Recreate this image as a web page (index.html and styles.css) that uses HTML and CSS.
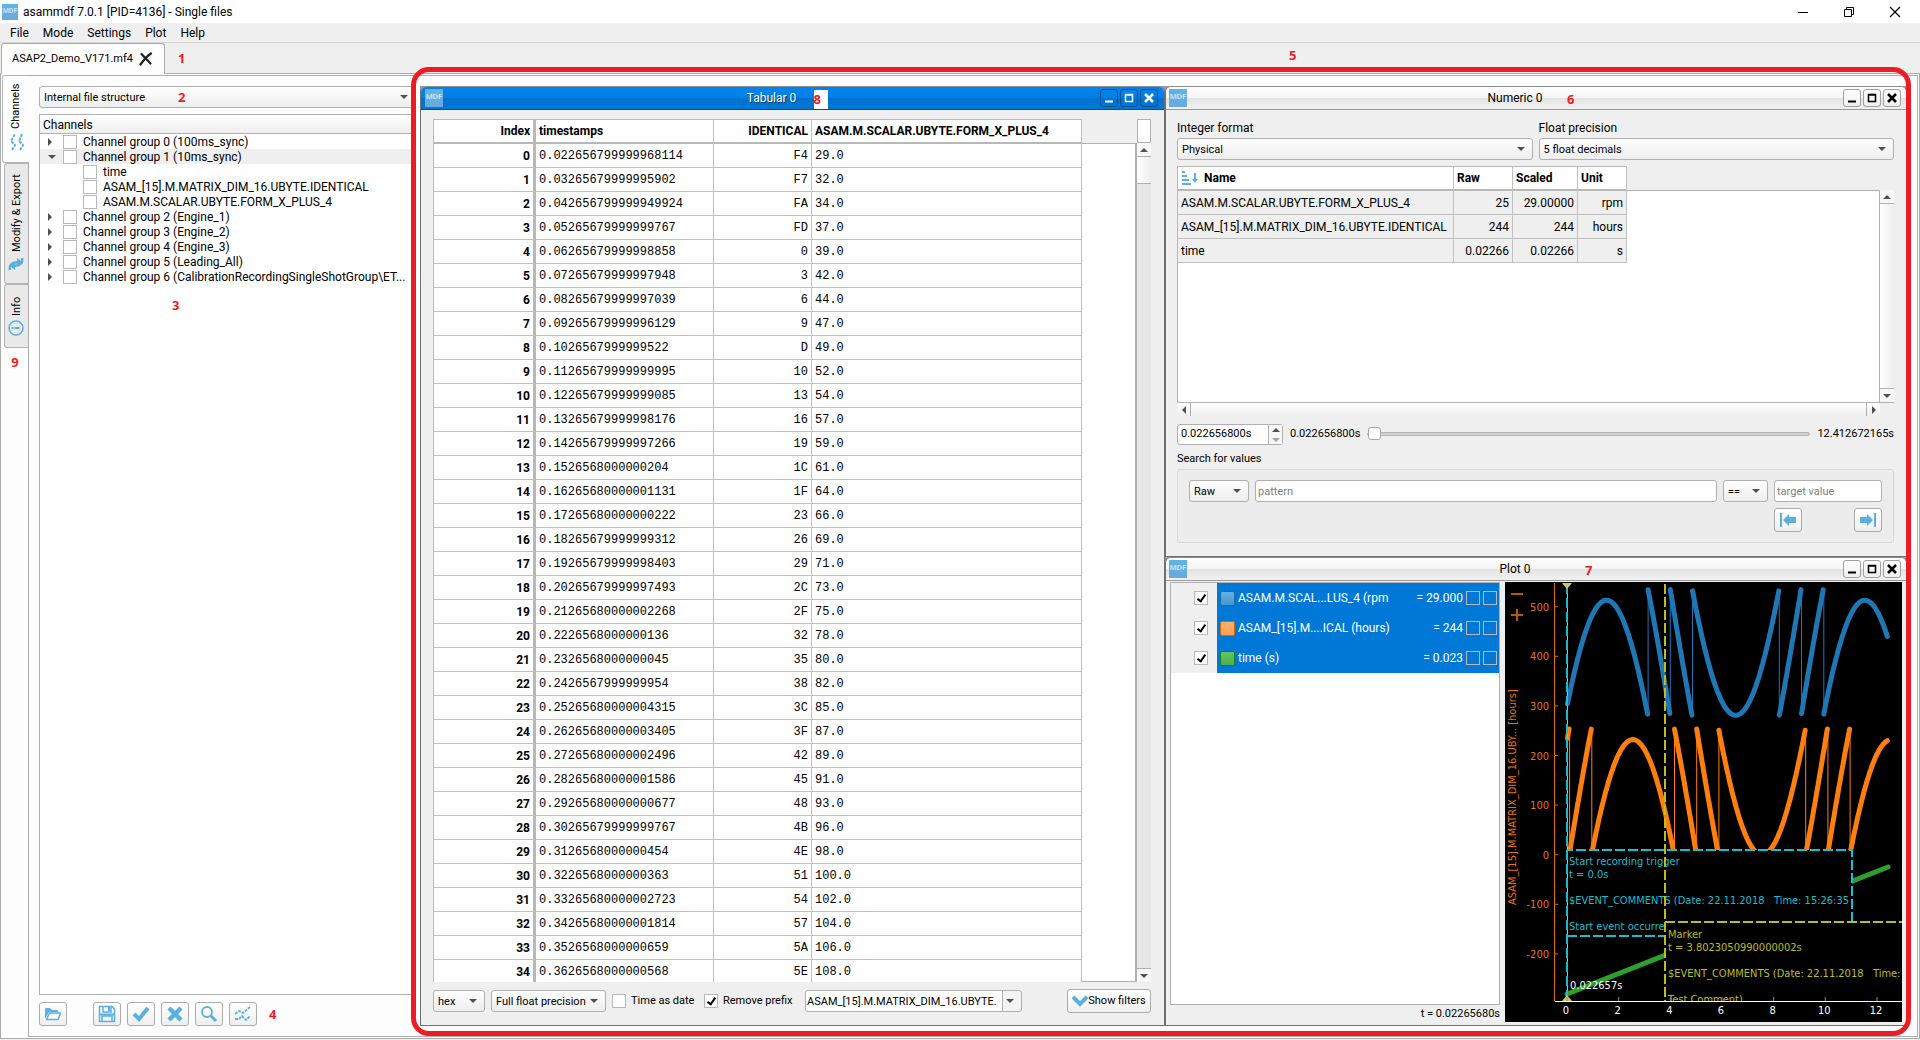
FILE: index.html
```html
<!DOCTYPE html>
<html lang="en">
<head>
<meta charset="utf-8">
<title>asammdf 7.0.1 [PID=4136] - Single files</title>
<link rel="stylesheet" href="styles.css">
</head>
<body>
<header class="titlebar">
  <span class="logo logo-app">MDF</span>
  <h1 class="app-title">asammdf 7.0.1 [PID=4136] - Single files</h1>
  <div class="sys-buttons">
    <button class="sys" aria-label="Minimize"><svg width="12" height="12"><path d="M1 6.500h10" stroke="#000"/></svg></button>
    <button class="sys" aria-label="Restore"><svg width="12" height="12" fill="none" stroke="#000"><path d="M3.500 3V1.500h7v7H9M1.500 3.500h7v7h-7z"/></svg></button>
    <button class="sys" aria-label="Close"><svg width="12" height="12"><path d="M1 1l10 10M11 1L1 11" stroke="#000" stroke-width="1.200"/></svg></button>
  </div>
</header>
<nav class="menubar">
  <button class="menu">File</button><button class="menu">Mode</button><button class="menu">Settings</button><button class="menu">Plot</button><button class="menu">Help</button>
</nav>
<div class="filetabs">
  <div class="filetab"><span>ASAP2_Demo_V171.mf4</span>
    <button class="closetab" aria-label="Close file"><svg width="14" height="14"><path d="M2.500 2l9 9.500M12 1.500C8 4 4 9 1.500 12.500" fill="none" stroke="#222" stroke-width="2.200" stroke-linecap="round"/></svg></button>
  </div>
  <span class="note">1</span>
</div>
<main class="doc">
  <aside class="sidetabs">
    <button class="sidetab active"><svg width="16" height="18" fill="none" stroke="#5bb0e2" stroke-width="2" stroke-dasharray="3 1"><path d="M4 1l-3 5 4 4-3 7M12 1L9 6l4 4-4 7"/></svg><span>Channels</span></button>
    <button class="sidetab export"><svg width="16" height="16" fill="none" stroke="#5bb0e2" stroke-width="2.500"><path d="M14 2C15 7 12 10 6 9.500"/><path d="M2 14C1 9 4 6 10 6.500"/><path d="M7 5v9L1 9.500zM9 2v9l6-4.500z" fill="#5bb0e2" stroke="none"/></svg><span>Modify &amp; Export</span></button>
    <button class="sidetab info"><svg width="16" height="16" fill="none" stroke="#5bb0e2" stroke-width="1.500"><circle cx="8" cy="8" r="7"/><path d="M4.500 8h5" stroke-width="2"/><path d="M10.500 8h2" stroke-width="2"/></svg><span>Info</span></button>
    <span class="note">9</span>
  </aside>
  <section class="pane">
    <div class="browser">
      <div class="combo combo-wide"><select aria-label="Channel view"><option>Internal file structure</option></select><span class="note note-2">2</span></div>
      <div class="tree">
        <div class="tree-head">Channels</div>
        <ul class="tree-list">
          <li class="node"><i class="closed"></i><label><input type="checkbox">Channel group 0 (100ms_sync)</label></li>
          <li class="node current"><i class="opened"></i><label><input type="checkbox">Channel group 1 (10ms_sync)</label></li>
          <li class="node leaf"><label><input type="checkbox">time</label></li>
          <li class="node leaf"><label><input type="checkbox">ASAM_[15].M.MATRIX_DIM_16.UBYTE.IDENTICAL</label></li>
          <li class="node leaf"><label><input type="checkbox">ASAM.M.SCALAR.UBYTE.FORM_X_PLUS_4</label></li>
          <li class="node"><i class="closed"></i><label><input type="checkbox">Channel group 2 (Engine_1)</label></li>
          <li class="node"><i class="closed"></i><label><input type="checkbox">Channel group 3 (Engine_2)</label></li>
          <li class="node"><i class="closed"></i><label><input type="checkbox">Channel group 4 (Engine_3)</label></li>
          <li class="node"><i class="closed"></i><label><input type="checkbox">Channel group 5 (Leading_All)</label></li>
          <li class="node"><i class="closed"></i><label><input type="checkbox">Channel group 6 (CalibrationRecordingSingleShotGroup\ET...</label></li>
        </ul>
        <span class="note note-3">3</span>
      </div>
      <div class="tools">
        <button class="btn tool first" aria-label="Load channel list"><svg width="18" height="16" fill="#5bb0e2"><path d="M1 13V3q0-1 1-1h4l1.500 2H13q1 0 1 1v1H5z"/><path d="M5.500 7H16.500L14 13.500H2.500z" fill="#fafafa" stroke="#5bb0e2" stroke-width="1.500" stroke-linejoin="round"/></svg></button>
        <button class="btn tool" aria-label="Save channel list"><svg width="18" height="18" fill="none" stroke="#5bb0e2" stroke-width="1.500"><path d="M1.500 1.500H14L16.500 4V16.500h-15z"/><path d="M5 2v5h8V2M4 16v-5h10v5"/><path d="M10 2h2v4h-2z" fill="#5bb0e2" stroke="none"/><path d="M1 9.500h16" stroke-width="2"/></svg></button>
        <button class="btn tool" aria-label="Select all"><svg width="18" height="16"><path d="M2 8l5 5L16 2" fill="none" stroke="#5bb0e2" stroke-width="4"/></svg></button>
        <button class="btn tool" aria-label="Clear selection"><svg width="18" height="16"><path d="M3 2l12 12M15 2L3 14" stroke="#5bb0e2" stroke-width="4.500"/></svg></button>
        <button class="btn tool" aria-label="Search"><svg width="18" height="18" fill="none" stroke="#5bb0e2"><circle cx="7" cy="7" r="5" stroke-width="1.800"/><path d="M11 11l5 5" stroke-width="3"/></svg></button>
        <button class="btn tool" aria-label="Create window"><svg width="18" height="16" fill="none" stroke="#5bb0e2" stroke-width="1.800" stroke-dasharray="3 1"><path d="M1 8l4-3 4 2 7-6M1 13h4l3-3 4 4 4-4"/></svg></button>
        <span class="note">4</span>
      </div>
    </div>
    <div class="mdi">
      <section class="win tabular active-win">
        <header class="win-title"><span class="logo">MDF</span><h2>Tabular 0<span class="note note-8">8</span></h2>
          <button class="wb" aria-label="Minimize"><svg width="12" height="12"><path d="M2 9.500h8" stroke="currentColor" stroke-width="2"/></svg></button>
          <button class="wb" aria-label="Maximize"><svg width="12" height="12"><path d="M2.500 2.500h7v7h-7zM2 3h8" fill="none" stroke="currentColor" stroke-width="1.500"/></svg></button>
          <button class="wb" aria-label="Close"><svg width="12" height="12"><path d="M2 2l8 8M10 2l-8 8" stroke="currentColor" stroke-width="2.500"/></svg></button>
        </header>
        <div class="tab-body">
          <div class="grid-view">
            <table class="grid values">
              <colgroup><col class="c-index"><col class="c-time"><col class="c-ident"><col class="c-form"></colgroup>
              <thead><tr><th class="r">Index</th><th>timestamps</th><th class="r">IDENTICAL</th><th>ASAM.M.SCALAR.UBYTE.FORM_X_PLUS_4</th></tr></thead>
              <tbody id="rows"></tbody>
            </table>
            <div class="blank"></div>
            <div class="vscroll long"><b class="up"></b><span class="thumb"></span><b class="down"></b></div>
            <div class="corner"></div>
          </div>
          <div class="tab-controls">
            <div class="combo w-hex"><select aria-label="Format"><option>hex</option></select></div>
            <div class="combo w-prec"><select aria-label="Float precision"><option>Full float precision</option></select></div>
            <label class="check date-check"><input type="checkbox">Time as date</label>
            <label class="check prefix-check"><input type="checkbox" checked>Remove prefix</label>
            <div class="combo editable"><select aria-label="Prefix"><option>ASAM_[15].M.MATRIX_DIM_16.UBYTE.</option></select></div>
            <button class="btn filters"><svg width="16" height="12"><path d="M1 2l7 7 7-7" fill="none" stroke="#5bb0e2" stroke-width="4"/></svg>Show filters</button>
          </div>
        </div>
      </section>
      <section class="win numeric">
        <header class="win-title"><span class="logo">MDF</span><h2>Numeric 0<span class="note note-6">6</span></h2>
          <button class="wb" aria-label="Minimize"><svg width="12" height="12"><path d="M2 9.500h8" stroke="currentColor" stroke-width="2"/></svg></button>
          <button class="wb" aria-label="Maximize"><svg width="12" height="12"><path d="M2.500 2.500h7v7h-7zM2 3h8" fill="none" stroke="currentColor" stroke-width="1.500"/></svg></button>
          <button class="wb" aria-label="Close"><svg width="12" height="12"><path d="M2 2l8 8M10 2l-8 8" stroke="currentColor" stroke-width="2.500"/></svg></button>
        </header>
        <div class="num-body">
          <div class="formats">
            <div><label for="intf">Integer format</label><div class="combo"><select id="intf"><option>Physical</option></select></div></div>
            <div><label for="flf">Float precision</label><div class="combo"><select id="flf"><option>5 float decimals</option></select></div></div>
          </div>
          <div class="num-view">
            <table class="grid nums">
              <colgroup><col class="n-name"><col class="n-raw"><col class="n-scaled"><col class="n-unit"></colgroup>
              <thead><tr><th><svg class="sort" width="18" height="16" fill="#5bb0e2"><path d="M1 1h3v2H1zM1 5h5v2H1zM1 9h7v2H1zM1 13h9v2H1zM13 3h2v6h2l-3 4-3-4h2z"/></svg>Name</th><th>Raw</th><th>Scaled</th><th>Unit</th></tr></thead>
              <tbody>
                <tr><td>ASAM.M.SCALAR.UBYTE.FORM_X_PLUS_4</td><td class="r">25</td><td class="r">29.00000</td><td class="r">rpm</td></tr>
                <tr><td>ASAM_[15].M.MATRIX_DIM_16.UBYTE.IDENTICAL</td><td class="r">244</td><td class="r">244</td><td class="r">hours</td></tr>
                <tr><td>time</td><td class="r">0.02266</td><td class="r">0.02266</td><td class="r">s</td></tr>
              </tbody>
            </table>
            <div class="blank"></div>
            <div class="vscroll"><b class="up"></b><b class="down"></b></div>
          </div>
          <div class="hscroll"><b class="left"></b><b class="right"></b></div>
          <div class="timeline">
            <div class="spin"><input type="text" value="0.022656800s" aria-label="Timestamp"><span class="arrows"><b class="up"></b><b class="down"></b></span></div>
            <label for="pos">0.022656800s</label>
            <input id="pos" class="slider" type="range" min="0" max="1000" value="0">
            <span>12.412672165s</span>
          </div>
          <fieldset class="search">
            <legend>Search for values</legend>
            <div class="search-box">
              <div class="combo"><select aria-label="Value kind"><option>Raw</option></select></div>
              <input class="field" type="text" placeholder="pattern" aria-label="Pattern">
              <div class="combo"><select aria-label="Operator"><option>==</option></select></div>
              <input class="field" type="text" placeholder="target value" aria-label="Target value">
              <div class="steps">
                <button class="btn step" aria-label="Previous match"><svg width="16" height="14" fill="#5bb0e2"><path d="M0 0h2v14H0zM3 7l6-6v3h7v6H9v3z"/></svg></button>
                <button class="btn step" aria-label="Next match"><svg width="16" height="14" fill="#5bb0e2"><path d="M14 0h2v14h-2zM13 7L7 1v3H0v6h7v3z"/></svg></button>
              </div>
            </div>
          </fieldset>
        </div>
      </section>
      <section class="win plot">
        <header class="win-title"><span class="logo">MDF</span><h2>Plot 0<span class="note note-7">7</span></h2>
          <button class="wb" aria-label="Minimize"><svg width="12" height="12"><path d="M2 9.500h8" stroke="currentColor" stroke-width="2"/></svg></button>
          <button class="wb" aria-label="Maximize"><svg width="12" height="12"><path d="M2.500 2.500h7v7h-7zM2 3h8" fill="none" stroke="currentColor" stroke-width="1.500"/></svg></button>
          <button class="wb" aria-label="Close"><svg width="12" height="12"><path d="M2 2l8 8M10 2l-8 8" stroke="currentColor" stroke-width="2.500"/></svg></button>
        </header>
        <div class="plot-body">
          <div class="signals">
            <ul class="signal-list">
              <li><input type="checkbox" checked aria-label="Show FORM_X_PLUS_4"><div class="sig"><i class="swatch blue"></i><span class="sig-name">ASAM.M.SCAL...LUS_4 (rpm</span><span class="sig-val">= 29.000</span><input type="checkbox" aria-label="Common axis"><input type="checkbox" aria-label="Individual axis"></div></li>
              <li><input type="checkbox" checked aria-label="Show IDENTICAL"><div class="sig"><i class="swatch orange"></i><span class="sig-name">ASAM_[15].M....ICAL (hours)</span><span class="sig-val">= 244</span><input type="checkbox" aria-label="Common axis"><input type="checkbox" aria-label="Individual axis"></div></li>
              <li><input type="checkbox" checked aria-label="Show time"><div class="sig"><i class="swatch green"></i><span class="sig-name">time (s)</span><span class="sig-val">= 0.023</span><input type="checkbox" aria-label="Common axis"><input type="checkbox" aria-label="Individual axis"></div></li>
            </ul>
            <div class="cursor-time">t = 0.02265680s</div>
          </div>
          <svg class="graph" viewBox="0 0 397 440" preserveAspectRatio="xMinYMin meet">
            <defs>
              <clipPath id="area"><path d="M50 0H396V419H50z"/></clipPath>
              <clipPath id="cyanText"><path d="M62 260H346V354H62z"/></clipPath>
              <clipPath id="yellowText"><path d="M160 340H396V419H160z"/></clipPath>
            </defs>
            <g stroke="#b8590a" stroke-width="2"><path d="M6 12h12M6 33h12M12 27v12"/></g>
            <path d="M49.500 1V419" stroke="#d86c10"/>
            <g id="yaxis" class="ytext"></g>
            <text class="ytext" transform="translate(11 323) rotate(-90)">ASAM_[15].M.MATRIX_DIM_16.UBY... [hours]</text>
            <g clip-path="url(#area)" fill="none">
              <path id="blueThin" stroke="#1f77b4"/><path id="blueThick" stroke="#1f77b4" stroke-width="5" stroke-linecap="round"/>
              <path id="orangeThin" stroke="#ff7f0e"/><path id="orangeThick" stroke="#ff7f0e" stroke-width="5" stroke-linecap="round"/>
              <path d="M62 412L383 285" stroke="#2ca02c" stroke-width="5" stroke-linecap="round"/>
            </g>
            <path d="M62 268H347V354H62z"/>
            <path d="M347 340V268H62M62 354H160" fill="none" stroke="#17becf" stroke-width="2" stroke-dasharray="10 3"/>
            <g class="cyan" clip-path="url(#cyanText)">
              <text x="64" y="283">Start recording trigger</text><text x="64" y="296">t = 0.0s</text>
              <text x="64" y="322">$EVENT_COMMENTS (Date: 22.11.2018&#160;&#160; Time: 15:26:35</text>
              <text x="64" y="348">Start event occurre</text>
            </g>
            <path d="M160 340H397V419H160z"/>
            <path d="M160 340H397" stroke="#bcbd22" stroke-width="2" stroke-dasharray="10 3"/>
            <path d="M160 2V419" stroke="#bcbd22" stroke-width="2" stroke-dasharray="10 3"/>
            <g class="yellow" clip-path="url(#yellowText)">
              <text x="163" y="356">Marker</text><text x="163" y="369">t = 3.8023050990000002s</text>
              <text x="163" y="395">$EVENT_COMMENTS (Date: 22.11.2018&#160;&#160; Time:</text><text x="163" y="421">Test Comment)</text>
            </g>
            <path d="M62.500 2V419" stroke="#b9c27a"/>
            <path d="M62 2V419" stroke="#17becf" stroke-width="2" stroke-dasharray="10 4"/>
            <path d="M57 1h10l-5 6zM57 419h10l-5-6z" fill="#cfc75e"/>
            <text class="white" x="65" y="407">0.022657s</text>
            <path d="M50 419.500H397" stroke="#fff"/>
            <g id="xaxis" class="white" text-anchor="middle"></g>
          </svg>
        </div>
      </section>
      <div class="callout"></div>
      <span class="note note-5">5</span>
    </div>
  </section>
</main>
<script src="app.js"></script>
</body>
</html>
```
FILE: styles.css
```css
* { box-sizing: border-box; }
body {
  margin: 0; height: 100vh; min-height: 640px; display: flex; flex-direction: column;
  background: #efefef; color: #000; font: 12px/16px Roboto, "Open Sans", sans-serif; overflow: hidden;
}
button, input, select { font: inherit; color: inherit; margin: 0; }
button { padding: 0; background: none; border: 0; }
h1, h2, ul { margin: 0; padding: 0; font: inherit; list-style: none; }
svg { flex: none; }
.note { color: #ed1c24; font: 700 13px/16px "Open Sans", sans-serif; }

/* Controls use the smaller of the two text sizes. */
select, .filetab, .sidetab, .check, .filters, .timeline, .search, .cursor-time { font-size: 11px; }

.titlebar { display: flex; align-items: center; height: 23px; background: #fff; padding-left: 2px; gap: 5px; flex: none; }
.app-title { flex: 1; }
.logo {
  width: 18px; height: 18px; flex: none; background: linear-gradient(#5fb4e4, #6aa9dd); color: #c4e0f4;
  font-size: 8px; font-weight: 700; line-height: 15px; text-align: center; overflow: hidden;
}
.logo-app { width: 16px; height: 16px; font-size: 7px; }
.sys-buttons { display: flex; padding-right: 2px; }
.sys { width: 46px; height: 20px; display: grid; place-items: center; }

.menubar { display: flex; height: 20px; border-bottom: 1px solid #d6d6d6; padding-left: 3px; flex: none; }
.menu { padding: 0 7px; }
.filetabs { display: flex; height: 30px; flex: none; gap: 13px; align-items: center; padding-left: 1px; }
.filetab {
  display: flex; align-items: center; gap: 6px; width: 164px; height: 31px; padding-left: 10px; background: #fdfdfd;
  border: 1px solid #acacac; border-bottom: 0; border-radius: 3px 3px 0 0; align-self: flex-start; z-index: 1;
}
.closetab { display: grid; }
.doc {
  flex: 1; min-height: 0; display: flex; border: 1px solid #acacac; padding: 1px; margin-bottom: 1px; background: #fdfdfd;
}
.sidetabs { width: 26px; display: flex; flex-direction: column; flex: none; align-items: flex-end; }
.sidetabs .note { align-self: center; margin-top: 6px; }
.sidetab {
  writing-mode: vertical-rl; transform: rotate(180deg); width: 24px; display: flex; align-items: center; gap: 4px;
  background: #e9e9e9; border: 1px solid #b4b4b4; border-left: 0; border-radius: 0 3px 3px 0; white-space: nowrap; padding: 11px 0;
}
.sidetab.active { width: 27px; height: 88px; background: #fdfdfd; z-index: 1; align-self: flex-start; }
.sidetab.export { height: 121px; }
.sidetab.info { height: 64px; }

.pane { flex: 1; min-width: 0; display: flex; gap: 6px; border: 1px solid #acacac; padding: 10px; }
.browser { width: 375px; flex: none; display: flex; flex-direction: column; gap: 6px; }
.combo {
  position: relative; height: 22px; border: 1px solid #b0b0b0; border-radius: 3px; background: linear-gradient(#fff, #ededed);
}
.combo::after {
  content: ""; position: absolute; right: 7px; top: 8px; border: 4px solid transparent; border-top-color: #505050;
  border-bottom: 0; pointer-events: none;
}
.combo select { appearance: none; width: 100%; height: 20px; border: 0; background: none; padding: 1px 4px 0; }
.combo-wide::after { right: 5px; }
.note-2 { position: absolute; left: 138px; top: 2px; }
.tree { position: relative; flex: 1; background: #fff; border: 1px solid #b0b0b0; overflow: hidden; }
.tree-head { height: 19px; line-height: 20px; padding-left: 3px; background: linear-gradient(#fff, #eee); border-bottom: 1px solid #b0b0b0; }
.node { display: flex; align-items: center; height: 15px; padding-left: 8px; white-space: nowrap; }
.node.current { background: #efefef; }
.node i { width: 15px; flex: none; }
.closed::before { content: ""; display: block; width: 0; border: 4px solid transparent; border-left-color: #505050; border-right: 0; }
.opened::before { content: ""; display: block; width: 0; border: 4px solid transparent; border-top-color: #505050; border-bottom: 0; }
.node label { display: flex; align-items: center; gap: 6px; flex: none; }
.node.leaf { padding-left: 43px; }
input[type="checkbox"] { appearance: none; width: 14px; height: 14px; border: 1px solid #b8b8b8; background: #fff; flex: none; }
input[type="checkbox"]:checked::before {
  content: ""; display: block; width: 3px; height: 7px; margin: 1px 4px; border: solid #000; border-width: 0 2px 2px 0; transform: rotate(35deg);
}
.note-3 { position: absolute; left: 132px; top: 182px; }
.btn { background: linear-gradient(#fff, #efefef); border: 1px solid #acacac; border-radius: 3px; display: flex; align-items: center; justify-content: center; }
.tools { display: flex; gap: 6px; align-items: center; height: 25px; }
.tool { width: 28px; height: 24px; }
.tool.first { margin-right: 20px; }
.tools .note { margin-left: 6px; }

.mdi { position: relative; flex: 1; min-width: 0; display: grid; grid-template: 471fr 469fr / 745fr 742fr; background: #9b9b9b; }
.callout { position: absolute; inset: -19px -4px -10px -9px; border: 5px solid #ed1c24; border-radius: 18px; pointer-events: none; }
.note-5 { position: absolute; left: 869px; top: -39px; }
.win {
  display: flex; flex-direction: column; min-width: 0; min-height: 0; background: #efefef; border: 1px solid #707070;
  border-top-color: #8c8c8c; border-radius: 6px 6px 0 0;
}
.tabular { grid-row: 1 / 3; }
.win-title {
  display: flex; align-items: center; gap: 2px; height: 23px; flex: none; padding: 0 5px 0 3px;
  background: linear-gradient(#fff, #f4f4f4 50%, #e3e3e3 50%, #f1f1f1); border-bottom: 1px solid #999; border-radius: 5px 5px 0 0;
}
.active-win .win-title { padding: 0 6px 0 4px; background: linear-gradient(#0084f0, #0080e6 48%, #0072d0 52%, #0078d7); border-color: #00508f; color: #fff; }
.active-win h2 { text-shadow: 1px 1px #1c3c60; }
.active-win .note { text-shadow: none; }
.win-title h2 { position: relative; flex: 1; text-align: center; line-height: 22px; }
.win-title .note { position: absolute; top: 4px; }
.win-title .note-8 { left: calc(50% + 42px); top: 3px; width: 14px; height: 19px; line-height: 19px; background: #fff; text-align: left; }
.note-6 { left: calc(50% + 52px); }
.note-7 { left: calc(50% + 70px); }
.wb { width: 18px; height: 18px; border: 1px solid #a0a0a0; border-radius: 3px; display: grid; place-items: center; background: linear-gradient(#fff, #eee); }
.active-win .wb { background: none; border-color: #00508f; color: #fff; }

.tab-body { flex: 1; min-height: 0; display: flex; flex-direction: column; padding: 9px 13px 12px 12px; gap: 7px; }
.grid-view { flex: 1; min-height: 0; display: grid; grid-template: 24px 1fr / auto 1fr 14px; overflow: hidden; }
.grid { border-collapse: separate; border-spacing: 0; table-layout: fixed; grid-area: 1 / 1 / 3 / 2; align-self: start; border-left: 1px solid #b8b8b8; }
.grid th, .grid td { height: 24px; padding: 0 3px; border: solid #c0c0c0; border-width: 0 1px 1px 0; text-align: left; overflow: hidden; white-space: nowrap; }
.grid th { height: 25px; background: #fff; border-top: 1px solid #b8b8b8; border-bottom: 2px solid #b8b8b8; font-weight: 700; }
.grid .r { text-align: right; }
.values { width: 649px; }
.values td { background: #fff; font-family: "Liberation Mono", monospace; }
.values td:first-child { font-family: inherit; font-weight: 700; }
.values th:first-child, .values td:first-child { border-right: 3px solid #b8b8b8; }
.c-index { width: 102px; }
.c-time { width: 178px; }
.c-ident { width: 98px; }
.blank { grid-area: 2 / 2; background: #fff; border: solid #b0b0b0; border-width: 1px 1px 1px 0; }
.grid-view .blank { border-right-width: 2px; }
.corner { grid-area: 1 / 3; background: #fff; border: 1px solid #b0b0b0; }
.vscroll { grid-area: 2 / 3; display: flex; flex-direction: column; background: linear-gradient(90deg, #fff, #eee); justify-content: space-between; }
.vscroll.long { background: #e6e6e6; justify-content: flex-start; }
.vscroll b, .arrows b { height: 14px; display: grid; place-items: center; }
.vscroll b { background: #f6f6f6; }
.vscroll .up { border-bottom: 1px solid #b0b0b0; }
.vscroll .down { border-top: 1px solid #b0b0b0; }
.long .down { margin-top: auto; }
.thumb { height: 27px; background: linear-gradient(90deg, #fff, #eee); border-bottom: 1px solid #b0b0b0; }
.up::before { content: ""; border: 4px solid transparent; border-bottom-color: #505050; border-top: 0; }
.down::before { content: ""; border: 4px solid transparent; border-top-color: #505050; border-bottom: 0; }
.tab-controls { display: flex; align-items: center; height: 24px; gap: 6px; }
.w-hex { width: 52px; flex: none; }
.w-prec { width: 115px; flex: none; }
.check { display: flex; align-items: center; gap: 5px; white-space: nowrap; flex: none; }
.date-check { width: 86px; }
.prefix-check { width: 95px; }
.editable { width: 217px; flex: none; background: linear-gradient(90deg, #fff 196px, #b0b0b0 196px, #b0b0b0 197px, #f4f4f4 197px); }
.editable select { padding: 1px 20px 0 1px; }
.filters { height: 24px; width: 84px; margin-left: auto; white-space: nowrap; flex: none; }

.num-body { flex: 1; min-height: 0; display: flex; flex-direction: column; padding: 8px 12px 13px 11px; }
.formats { display: grid; grid-template-columns: 1fr 1fr; gap: 6px; line-height: 20px; }
.num-view {
  flex: 1; min-height: 0; margin-top: 6px; display: grid; grid-template: 24px 1fr / auto 1fr 14px;
  background: linear-gradient(#fff, #fff) 0 100% / calc(100% - 14px) calc(100% - 24px) no-repeat; border-bottom: 1px solid #b0b0b0;
}
.nums { width: 450px; }
.nums td { background: #efefef; }
.n-name { width: 276px; }
.n-raw { width: 59px; }
.n-scaled { width: 65px; }
.sort { vertical-align: middle; margin-right: 5px; }
.num-view .blank { border-bottom: 0; background: none; }
.num-view::before { content: ""; grid-area: 1 / 1 / 3 / 2; border-left: 1px solid #b0b0b0; }
.hscroll { display: flex; justify-content: space-between; height: 13px; margin-right: 14px; background: linear-gradient(#fff, #eee); }
.hscroll b { width: 14px; display: grid; place-items: center; }
.hscroll .left { border-right: 1px solid #b0b0b0; }
.hscroll .right { border-left: 1px solid #b0b0b0; }
.left::before { content: ""; border: 4px solid transparent; border-right-color: #505050; border-left: 0; }
.right::before { content: ""; border: 4px solid transparent; border-left-color: #505050; border-right: 0; }
.timeline { display: flex; align-items: center; gap: 7px; height: 22px; margin-top: 7px; }
.spin { display: flex; width: 106px; height: 21px; border: 1px solid #b0b0b0; border-radius: 3px; background: #fff; }
.spin input { flex: 1; min-width: 0; border: 0; background: none; padding: 0 3px; }
.arrows { width: 14px; border-left: 1px solid #b0b0b0; background: #f6f6f6; }
.arrows b { height: 10px; }
.arrows .down { opacity: 0.5; }
.slider { appearance: none; flex: 1; min-width: 0; height: 16px; background: none; }
.slider::-webkit-slider-runnable-track { height: 4px; background: #d2d2d2; border: 1px solid #b4b4b4; border-radius: 2px; }
.slider::-webkit-slider-thumb { appearance: none; width: 13px; height: 13px; margin-top: -6px; background: #fcfcfc; border: 1px solid #a8a8a8; border-radius: 3px; }
.search { margin: 6px 0 0; padding: 0; border: 0; min-width: 0; }
.search legend { padding: 0; height: 18px; line-height: 16px; }
.search-box { display: grid; grid-template: 22px 24px / 60px 1fr 45px 108px; gap: 6px; height: 74px; padding: 10px 11px; border: 1px solid #dadada; border-radius: 3px; background: #ececec; }
.field { width: 100%; min-width: 0; height: 22px; border: 1px solid #b0b0b0; border-radius: 3px; background: #fff; padding: 0 2px; }
.field::placeholder { color: #808080; opacity: 1; }
.steps { grid-column: 4; display: flex; justify-content: space-between; }
.step { width: 28px; height: 24px; }

.plot-body { flex: 1; min-height: 0; display: grid; grid-template-columns: 330fr 397fr; gap: 5px; padding: 1px 4px 3px; }
.signals { display: flex; flex-direction: column; min-width: 0; }
.signal-list { flex: 1; background: #fff; border: 1px solid #b0b0b0; }
.signal-list li { display: flex; align-items: center; height: 30px; padding-left: 23px; background: #efefef; }
.sig { flex: 1; min-width: 0; display: flex; align-items: center; gap: 3px; height: 30px; margin-left: 9px; padding: 0 2px 0 3px; background: #0078d7; color: #fff; }
.sig input[type="checkbox"] { background: none; }
.swatch { width: 15px; height: 15px; border-radius: 2px; border: 1px solid; }
.blue { background: linear-gradient(#5fb2e8, #4a94c8); border-color: #1c6ca8; }
.orange { background: linear-gradient(#ffb070, #ffa050); border-color: #d06a10; }
.green { background: linear-gradient(#60c860, #4caf50); border-color: #1c7c2c; }
.sig-name { width: 158px; overflow: hidden; white-space: nowrap; }
.sig-val { margin-left: auto; white-space: nowrap; }
.cursor-time { text-align: right; height: 17px; line-height: 18px; }
.graph { width: 100%; height: 100%; min-height: 0; background: #000; display: block; }
.graph text { font: 11px "DejaVu Sans Condensed", "Noto Sans", sans-serif; }
.ytext { fill: #e8720c; stroke: none; }
.cyan { fill: #17becf; }
.yellow { fill: #bcbd22; }
.white { fill: #fff; }
```
FILE: app.js
```js
// Rows of the tabular window: drift of the timestamp (sign + digits), raw hex value, scaled value.
const rows = [
  ['-68114', 'F4', 29], ['-5902', 'F7', 32], ['-49924', 'FA', 34], ['-9767', 'FD', 37], ['-8858', '0', 39],
  ['-7948', '3', 42], ['-7039', '6', 44], ['-6129', '9', 47], ['-522', 'D', 49], ['-9995', '10', 52],
  ['-9085', '13', 54], ['-8176', '16', 57], ['-7266', '19', 59], ['+204', '1C', 61], ['+1131', '1F', 64],
  ['+0222', '23', 66], ['-9312', '26', 69], ['-8403', '29', 71], ['-7493', '2C', 73], ['+2268', '2F', 75],
  ['+136', '32', 78], ['+045', '35', 80], ['-954', '38', 82], ['+4315', '3C', 85], ['+3405', '3F', 87],
  ['+2496', '42', 89], ['+1586', '45', 91], ['+0677', '48', 93], ['-9767', '4B', 96], ['+454', '4E', 98],
  ['+363', '51', 100], ['+2723', '54', 102], ['+1814', '57', 104], ['+659', '5A', 106], ['+568', '5E', 108]
];
document.getElementById('rows').innerHTML = rows.map(([drift, hex, value], i) => {
  const base = drift[0] === '-' ? '7999999' : '8000000';
  const time = '0.' + String(i + 2).padStart(2, '0') + '2656' + base + drift.slice(1);
  return `<tr><td class="r">${i}</td><td>${time}</td><td class="r">${hex}</td><td>${value}.0</td></tr>`;
}).join('');

// Plot scales: seconds and signal values to drawing units.
const px = t => 62 + 25.83 * t;
const py = v => 272.7 - 0.496 * v;

// A sine of ten seconds that overflows its eight bits.
function draw(name, peakTime, peak, low) {
  let thick = '', thin = '', last = null;
  for (let t = 0.02; t <= 12.41; t += 0.02) {
    const raw = peak - 500 + 500 * Math.cos((t - peakTime) * Math.PI / 5);
    const v = low + (((raw - low) % 256) + 256) % 256;
    const x = px(t).toFixed(1), y = py(v).toFixed(1);
    const jump = last && Math.abs(v - last.v) > 128;
    thick += (last && !jump ? 'L' : 'M') + x + ' ' + y;
    if (jump) thin += `M${x} ${last.y}L${x} ${y}`;
    last = { v, y };
  }
  document.getElementById(name + 'Thick').setAttribute('d', thick);
  document.getElementById(name + 'Thin').setAttribute('d', thin);
}
draw('blue', 1.53, 513, 281);
draw('orange', 2.55, 232, 0);

document.getElementById('yaxis').innerHTML = [500, 400, 300, 200, 100, 0, -100, -200].map(v =>
  `<text x="44" y="${py(v) + 4}" text-anchor="end">${v}</text><path d="M49 ${py(v)}h4" stroke="#d86c10"/>`).join('');
document.getElementById('xaxis').innerHTML = [0, 2, 4, 6, 8, 10, 12].map(t =>
  `<text x="${px(t) - 1}" y="432">${t}</text><path d="M${px(t)} 415v4" stroke="#888"/>`).join('');
```
